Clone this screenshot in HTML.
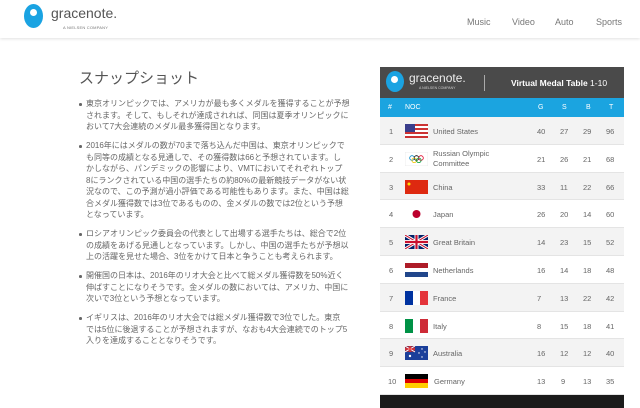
<!DOCTYPE html>
<html><head><meta charset="utf-8"><style>
*{margin:0;padding:0;box-sizing:border-box}
body{width:640px;height:402px;overflow:hidden;background:#fff;font-family:"Liberation Sans","Noto Sans CJK JP",sans-serif;color:#555;position:relative}
.hdr{position:absolute;left:0;top:0;width:640px;height:38px;background:#fff;box-shadow:0 1px 3px rgba(0,0,0,.12)}
.logo{position:absolute;left:24px;top:4px;width:19px;height:24px;border-radius:50%;background:#1aa3e2}
.logo:after{content:"";position:absolute;left:6px;top:5px;width:7px;height:7px;border-radius:50%;background:#fff}
.lt{position:absolute;left:51px;top:5px;font-size:14px;color:#555}
.ls{position:absolute;left:63px;top:25px;font-size:4px;color:#777;letter-spacing:.2px}
.nav{position:absolute;top:17px;font-size:9px;color:#777}
h1{position:absolute;left:79px;top:67px;font-size:15px;font-weight:normal;color:#555}
ul{position:absolute;left:78px;top:98px;list-style:none;font-size:8px;line-height:11.5px;color:#666;white-space:nowrap}
li{position:relative;padding-left:8px;margin-bottom:7.5px}
li:before{content:"";position:absolute;left:1px;top:5px;width:2.5px;height:2.5px;border-radius:50%;background:#666}
.tb{position:absolute;left:380px;top:67px;width:244px}
.th{height:31px;background:#4a4a4a;position:relative;color:#fff}
.th .c{position:absolute;left:6px;top:4px;width:18px;height:21px;border-radius:50%;background:#1aa3e2}
.th .c:after{content:"";position:absolute;left:5px;top:5px;width:7px;height:7px;border-radius:50%;background:#fff}
.th .g{position:absolute;left:29px;top:4px;font-size:12px;color:#eee}
.th .n{position:absolute;left:39px;top:19px;font-size:3.5px;color:#ccc}
.th .bar{position:absolute;left:104px;top:8px;width:1px;height:16px;background:#aaa}
.th .v{position:absolute;left:131px;top:11px;font-size:8.5px;font-weight:bold}
.th .v span{font-weight:normal}
.bl{height:19px;background:#1ba4e0;color:#fff;font-size:7px;position:relative}
.bl span,.r span{position:absolute;top:6px}
.r{height:27.8px;position:relative;font-size:7.5px;color:#666;border-bottom:1px solid #e4e4e4}
.r:nth-child(odd){background:#f3f3f3}
.r span{top:10px}
.r .nm2{top:4px;line-height:10px}
.f{position:absolute;left:25px;top:7px;width:23px;height:14px}
.ft{height:13px;background:#1b1b1b}
</style></head><body>
<div class="hdr">
<div class="logo"></div><div class="lt">gracenote.</div><div class="ls">A NIELSEN COMPANY</div>
<div class="nav" style="left:467px">Music</div>
<div class="nav" style="left:512px">Video</div>
<div class="nav" style="left:555px">Auto</div>
<div class="nav" style="left:596px">Sports</div>
</div>
<h1>スナップショット</h1>
<ul>
<li>東京オリンピックでは、アメリカが最も多くメダルを獲得することが予想<br>されます。そして、もしそれが達成されれば、同国は夏季オリンピックに<br>おいて7大会連続のメダル最多獲得国となります。</li>
<li>2016年にはメダルの数が70まで落ち込んだ中国は、東京オリンピックで<br>も同等の成績となる見通しで、その獲得数は66と予想されています。し<br>かしながら、パンデミックの影響により、VMTにおいてそれぞれトップ<br>8にランクされている中国の選手たちの約80%の最新競技データがない状<br>況なので、この予測が過小評価である可能性もあります。また、中国は総<br>合メダル獲得数では3位であるものの、金メダルの数では2位という予想<br>となっています。</li>
<li>ロシアオリンピック委員会の代表として出場する選手たちは、総合で2位<br>の成績をあげる見通しとなっています。しかし、中国の選手たちが予想以<br>上の活躍を見せた場合、3位をかけて日本と争うことも考えられます。</li>
<li>開催国の日本は、2016年のリオ大会と比べて総メダル獲得数を50%近く<br>伸ばすことになりそうです。金メダルの数においては、アメリカ、中国に<br>次いで3位という予想となっています。</li>
<li>イギリスは、2016年のリオ大会では総メダル獲得数で3位でした。東京<br>では5位に後退することが予想されますが、なおも4大会連続でのトップ5<br>入りを達成することとなりそうです。</li>
</ul>
<div class="tb">
<div class="th"><div class="c"></div><div class="g">gracenote.</div><div class="n">A NIELSEN COMPANY</div><div class="bar"></div><div class="v">Virtual Medal Table <span>1-10</span></div></div>
<div class="bl"><span style="left:8px">#</span><span style="left:25px">NOC</span><span style="left:158px">G</span><span style="left:182px">S</span><span style="left:206px">B</span><span style="left:229px">T</span></div>
<div>
<div class="r"><span style="left:9px">1</span><svg class="f" viewBox="0 0 23 14"><rect width="23" height="14" fill="#c33"/><g fill="#fff"><rect y="2" width="23" height="2"/><rect y="6" width="23" height="2"/><rect y="10" width="23" height="2"/></g><rect width="10" height="8" fill="#3a3e8c"/></svg><span style="left:53px">United States</span><span style="left:157px">40</span><span style="left:180px">27</span><span style="left:203px">29</span><span style="left:226px">96</span></div>
<div class="r"><span style="left:9px">2</span><svg class="f" viewBox="0 0 23 14"><rect width="23" height="14" fill="#fff" stroke="#ddd" stroke-width=".5"/><g fill="none" stroke-width=".8"><circle cx="7" cy="6" r="2.3" stroke="#0085c7"/><circle cx="11.5" cy="6" r="2.3" stroke="#000"/><circle cx="16" cy="6" r="2.3" stroke="#df0024"/><circle cx="9.2" cy="8.3" r="2.3" stroke="#f4c300"/><circle cx="13.8" cy="8.3" r="2.3" stroke="#009f3d"/></g></svg><span class="nm2" style="left:53px">Russian Olympic<br>Committee</span><span style="left:157px">21</span><span style="left:180px">26</span><span style="left:203px">21</span><span style="left:226px">68</span></div>
<div class="r"><span style="left:9px">3</span><svg class="f" viewBox="0 0 23 14"><rect width="23" height="14" fill="#de2910"/><circle cx="4" cy="4" r="1.5" fill="#ffde00"/></svg><span style="left:53px">China</span><span style="left:157px">33</span><span style="left:180px">11</span><span style="left:203px">22</span><span style="left:226px">66</span></div>
<div class="r"><span style="left:9px">4</span><svg class="f" viewBox="0 0 23 14"><rect width="23" height="14" fill="#fff"/><circle cx="11.5" cy="7" r="4" fill="#bc002d"/></svg><span style="left:53px">Japan</span><span style="left:157px">26</span><span style="left:180px">20</span><span style="left:203px">14</span><span style="left:226px">60</span></div>
<div class="r"><span style="left:9px">5</span><svg class="f" viewBox="0 0 23 14"><rect width="23" height="14" fill="#012169"/><path d="M0 0L23 14M23 0L0 14" stroke="#fff" stroke-width="3"/><path d="M0 0L23 14M23 0L0 14" stroke="#c8102e" stroke-width="1"/><path d="M11.5 0V14M0 7H23" stroke="#fff" stroke-width="4"/><path d="M11.5 0V14M0 7H23" stroke="#c8102e" stroke-width="2.2"/></svg><span style="left:53px">Great Britain</span><span style="left:157px">14</span><span style="left:180px">23</span><span style="left:203px">15</span><span style="left:226px">52</span></div>
<div class="r"><span style="left:9px">6</span><svg class="f" viewBox="0 0 23 14"><rect width="23" height="5" fill="#ae1c28"/><rect y="5" width="23" height="4" fill="#fff"/><rect y="9" width="23" height="5" fill="#21468b"/></svg><span style="left:53px">Netherlands</span><span style="left:157px">16</span><span style="left:180px">14</span><span style="left:203px">18</span><span style="left:226px">48</span></div>
<div class="r"><span style="left:9px">7</span><svg class="f" viewBox="0 0 23 14"><rect width="8" height="14" fill="#0032a0"/><rect x="8" width="7" height="14" fill="#fff"/><rect x="15" width="8" height="14" fill="#e4343b"/></svg><span style="left:53px">France</span><span style="left:157px">7</span><span style="left:180px">13</span><span style="left:203px">22</span><span style="left:226px">42</span></div>
<div class="r"><span style="left:9px">8</span><svg class="f" viewBox="0 0 23 14"><rect width="8" height="14" fill="#009246"/><rect x="8" width="7" height="14" fill="#fff"/><rect x="15" width="8" height="14" fill="#ce2b37"/></svg><span style="left:53px">Italy</span><span style="left:157px">8</span><span style="left:180px">15</span><span style="left:203px">18</span><span style="left:226px">41</span></div>
<div class="r"><span style="left:9px">9</span><svg class="f" viewBox="0 0 23 14"><rect width="23" height="14" fill="#1b3f9a"/><rect width="10" height="6" fill="#8a2c4a"/><path d="M0 0L10 6M10 0L0 6" stroke="#fff" stroke-width="1"/><path d="M5 0V6M0 3H10" stroke="#e33" stroke-width="1.2"/><g fill="#fff"><circle cx="5" cy="10" r="1.2"/><circle cx="17" cy="3" r=".7"/><circle cx="20" cy="6" r=".7"/><circle cx="17" cy="11" r=".7"/><circle cx="14" cy="7" r=".7"/></g></svg><span style="left:53px">Australia</span><span style="left:157px">16</span><span style="left:180px">12</span><span style="left:203px">12</span><span style="left:226px">40</span></div>
<div class="r"><span style="left:8px">10</span><svg class="f" viewBox="0 0 23 14"><rect width="23" height="5" fill="#000"/><rect y="5" width="23" height="4" fill="#d00"/><rect y="9" width="23" height="5" fill="#ffce00"/></svg><span style="left:54px">Germany</span><span style="left:157px">13</span><span style="left:181px">9</span><span style="left:203px">13</span><span style="left:226px">35</span></div>
</div>
<div class="ft"></div>
</div>
</body></html>
